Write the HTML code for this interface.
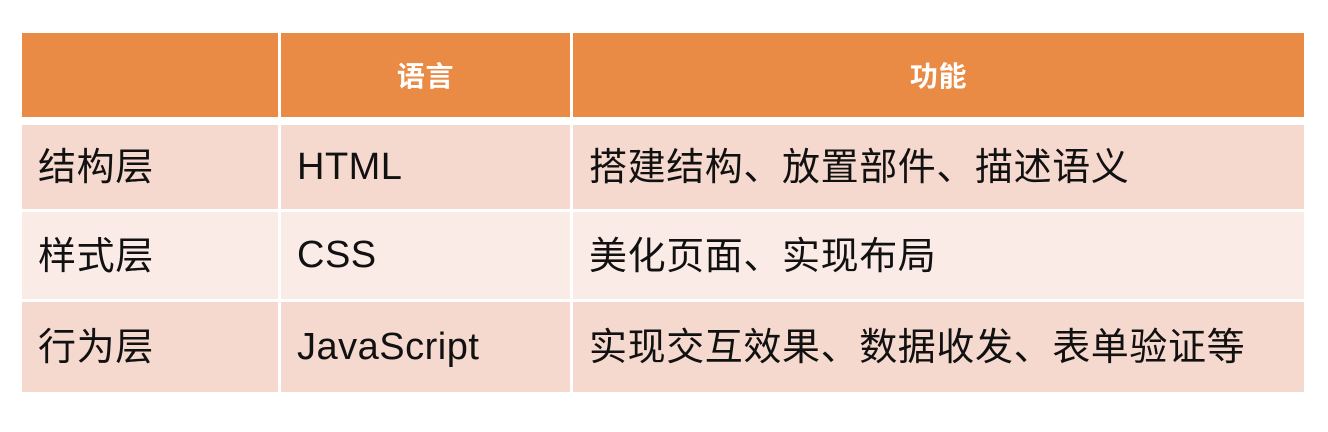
<!DOCTYPE html>
<html><head><meta charset="utf-8"><style>
body{margin:0;width:1328px;height:432px;background:#fff;position:relative;overflow:hidden;font-family:"Liberation Sans","Noto Sans CJK SC",sans-serif;}
.c{position:absolute;display:flex;align-items:center;box-sizing:border-box;color:#111;font-size:38px;letter-spacing:0.6px;padding-bottom:7px;}
.h{background:#E98A45;color:#fff;font-weight:bold;font-size:28px;justify-content:center;padding-bottom:0px;}
.o{background:#F5D8CE;padding-left:16px;}
.e{background:#FAEBE6;padding-left:16px;}
.l{font-size:38px;letter-spacing:0.5px;padding-bottom:0;padding-top:0px;}
</style></head><body>
<div class="c h" style="left:22px;top:33px;width:256px;height:84px"></div>
<div class="c h" style="left:281px;top:33px;width:289px;height:84px">语言</div>
<div class="c h" style="left:573px;top:33px;width:731px;height:84px">功能</div>

<div class="c o" style="left:22px;top:125px;width:256px;height:84px">结构层</div>
<div class="c o l" style="left:281px;top:125px;width:289px;height:84px">HTML</div>
<div class="c o" style="left:573px;top:125px;width:731px;height:84px">搭建结构、放置部件、描述语义</div>

<div class="c e" style="left:22px;top:212px;width:256px;height:87px">样式层</div>
<div class="c e l" style="left:281px;top:212px;width:289px;height:87px">CSS</div>
<div class="c e" style="left:573px;top:212px;width:731px;height:87px">美化页面、实现布局</div>

<div class="c o" style="left:22px;top:302px;width:256px;height:90px">行为层</div>
<div class="c o l" style="left:281px;top:302px;width:289px;height:90px">JavaScript</div>
<div class="c o" style="left:573px;top:302px;width:731px;height:90px">实现交互效果、数据收发、表单验证等</div>
</body></html>
